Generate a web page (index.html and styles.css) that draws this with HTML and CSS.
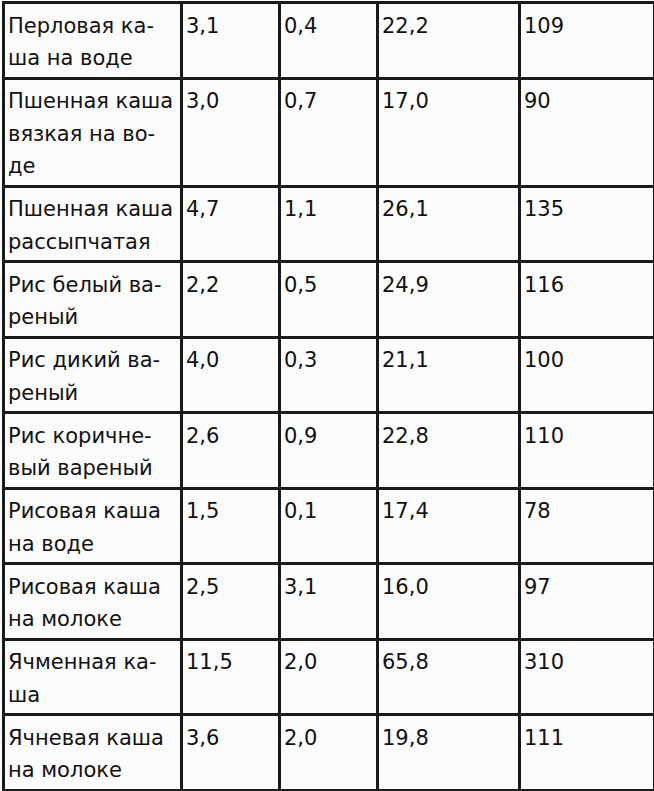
FILE: index.html
```html
<!DOCTYPE html>
<html lang="ru">
<head>
<meta charset="utf-8">
<link rel="stylesheet" href="styles.css">
</head>
<body>
<table class="nutri">
  <colgroup>
    <col class="c-name"><col class="c-num"><col class="c-num2"><col class="c-carb"><col class="c-kcal">
  </colgroup>
  <tbody>
    <tr><td>Перловая ка-<br>ша на воде</td><td>3,1</td><td>0,4</td><td>22,2</td><td>109</td></tr>
    <tr><td>Пшенная каша<br>вязкая на во-<br>де</td><td>3,0</td><td>0,7</td><td>17,0</td><td>90</td></tr>
    <tr><td>Пшенная каша<br>рассыпчатая</td><td>4,7</td><td>1,1</td><td>26,1</td><td>135</td></tr>
    <tr><td>Рис белый ва-<br>реный</td><td>2,2</td><td>0,5</td><td>24,9</td><td>116</td></tr>
    <tr><td>Рис дикий ва-<br>реный</td><td>4,0</td><td>0,3</td><td>21,1</td><td>100</td></tr>
    <tr><td>Рис коричне-<br>вый вареный</td><td>2,6</td><td>0,9</td><td>22,8</td><td>110</td></tr>
    <tr><td>Рисовая каша<br>на воде</td><td>1,5</td><td>0,1</td><td>17,4</td><td>78</td></tr>
    <tr><td>Рисовая каша<br>на молоке</td><td>2,5</td><td>3,1</td><td>16,0</td><td>97</td></tr>
    <tr><td>Ячменная ка-<br>ша</td><td>11,5</td><td>2,0</td><td>65,8</td><td>310</td></tr>
    <tr><td>Ячневая каша<br>на молоке</td><td>3,6</td><td>2,0</td><td>19,8</td><td>111</td></tr>
  </tbody>
</table>
</body>
</html>
```

FILE: styles.css
```css
html, body {
  margin: 0;
  padding: 0;
  background: #fcfcfc;
}
.nutri {
  border-collapse: collapse;
  table-layout: fixed;
  width: 651px;
  margin: 1px 0 0 2px;
  font-family: "DejaVu Sans", sans-serif;
  font-size: 21px;
  line-height: 32.5px;
  color: #111111;
}
.nutri td {
  border: 3px solid #1a1a1a;
  vertical-align: top;
  padding: 5.5px 3px 2px 3px;
  white-space: nowrap;
}
.c-name { width: 178px; }
.c-num { width: 98px; }
.c-num2 { width: 98px; }
.c-carb { width: 142px; }
.c-kcal { width: 135px; }
```
